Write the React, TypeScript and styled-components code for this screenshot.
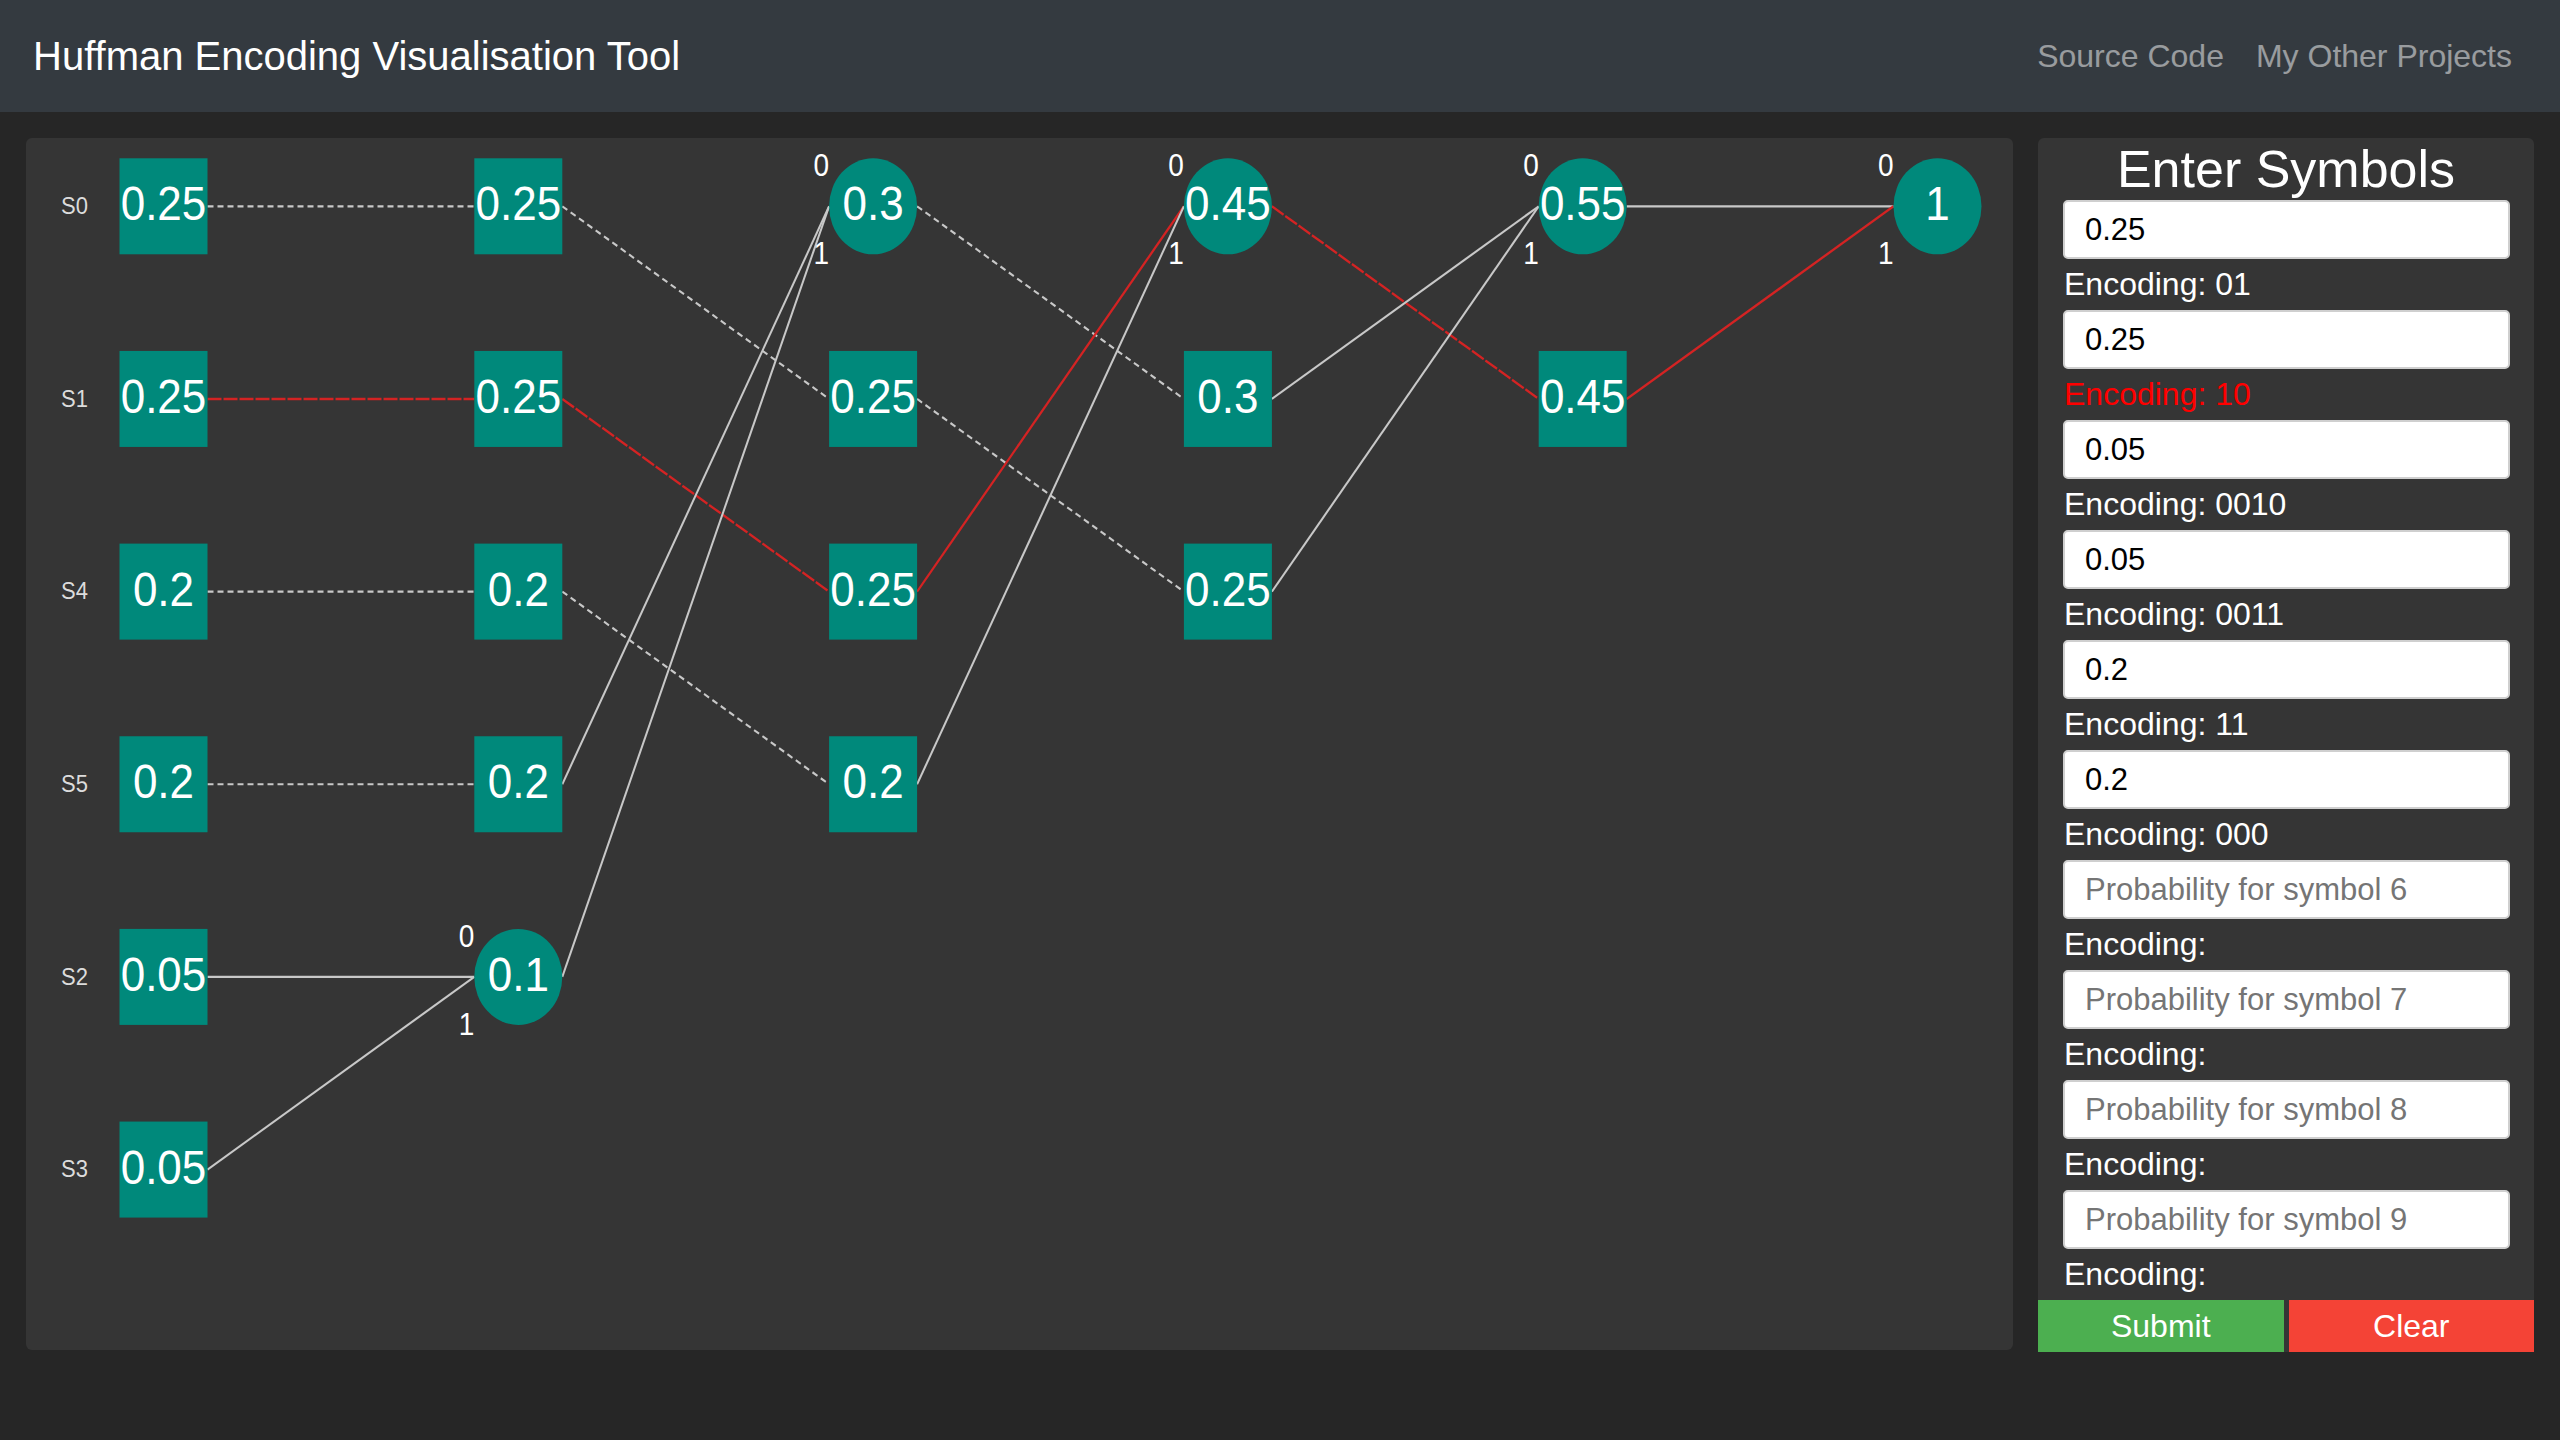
import React from "react";
import styled, { createGlobalStyle } from "styled-components";

const GlobalStyle = createGlobalStyle`
  html, body {
    margin: 0;
    padding: 0;
    background: #262626;
    font-family: "Liberation Sans", Arial, Helvetica, sans-serif;
  }
  * { box-sizing: border-box; }
`;

const Page = styled.div`
  width: 2560px;
  min-height: 1440px;
  background: #262626;
`;

const Header = styled.header`
  height: 112px;
  background: #343a40;
  display: flex;
  align-items: center;
  justify-content: space-between;
  padding: 0 32px 0 33px;
`;

const Brand = styled.div`
  font-size: 40px;
  line-height: 60px;
  color: #ffffff;
`;

const NavLinks = styled.nav`
  display: flex;
  align-items: center;
`;

const NavLink = styled.a`
  font-size: 32px;
  line-height: 48px;
  padding: 0 16px;
  color: rgba(255, 255, 255, 0.5);
  text-decoration: none;
`;

const Main = styled.main`
  display: flex;
  align-items: flex-start;
  gap: 25px;
  padding: 26px 26px 0 26px;
`;

const Canvas = styled.section`
  flex: 1;
  height: 1212px;
  background: #353535;
  border-radius: 6px;
  overflow: hidden;
`;

const Graph = styled.svg`
  display: block;
  width: 100%;
  height: 100%;
  font-family: "Liberation Sans", Arial, sans-serif;
`;

const Sidebar = styled.aside`
  width: 496px;
  height: 1214px;
  background: #353535;
  border-radius: 6px 6px 0 0;
  display: flex;
  flex-direction: column;
`;

const SidebarTitle = styled.h2`
  margin: 0;
  height: 62px;
  font-size: 52px;
  line-height: 62px;
  font-weight: 400;
  text-align: center;
  color: #ffffff;
`;

const Fields = styled.div`
  display: flex;
  flex-direction: column;
  padding: 0 24px 0 25px;
`;

const Input = styled.input`
  height: 59px;
  width: 100%;
  border: 2px solid #cfcfcf;
  border-radius: 5px;
  padding: 0 20px;
  font-family: "Liberation Sans", Arial, sans-serif;
  font-size: 31px;
  color: #000;
  background: #fff;
  outline: none;
  &::placeholder {
    color: #757575;
  }
`;

const Encoding = styled.div<{ $active?: boolean }>`
  height: 51px;
  line-height: 51px;
  font-size: 32px;
  padding-left: 1px;
  color: ${(p) => (p.$active ? "#ff0000" : "#ffffff")};
`;

const ButtonRow = styled.div`
  display: flex;
  gap: 5px;
  margin-top: auto;
`;

const ActionButton = styled.button<{ $variant: "submit" | "clear" }>`
  flex: 1;
  height: 52px;
  border: none;
  margin: 0;
  font-family: "Liberation Sans", Arial, sans-serif;
  font-size: 32px;
  color: #ffffff;
  background: ${(p) => (p.$variant === "submit" ? "#4caf50" : "#f44336")};
  cursor: pointer;
`;

// Graph geometry (viewBox units; y is stretched by preserveAspectRatio="none")
const VB_W = 1987;
const VB_H = 1111;
const COL_X0 = 137.5;
const COL_DX = 354.8;
const ROW_Y0 = 62.6;
const ROW_DY = 176.6;
const HALF = 44;

const cx = (c: number) => COL_X0 + COL_DX * c;
const cy = (r: number) => ROW_Y0 + ROW_DY * r;

type GNode = { c: number; r: number; v: string; merged?: boolean };

const nodes: GNode[] = [
  { c: 0, r: 0, v: "0.25" },
  { c: 0, r: 1, v: "0.25" },
  { c: 0, r: 2, v: "0.2" },
  { c: 0, r: 3, v: "0.2" },
  { c: 0, r: 4, v: "0.05" },
  { c: 0, r: 5, v: "0.05" },
  { c: 1, r: 0, v: "0.25" },
  { c: 1, r: 1, v: "0.25" },
  { c: 1, r: 2, v: "0.2" },
  { c: 1, r: 3, v: "0.2" },
  { c: 1, r: 4, v: "0.1", merged: true },
  { c: 2, r: 0, v: "0.3", merged: true },
  { c: 2, r: 1, v: "0.25" },
  { c: 2, r: 2, v: "0.25" },
  { c: 2, r: 3, v: "0.2" },
  { c: 3, r: 0, v: "0.45", merged: true },
  { c: 3, r: 1, v: "0.3" },
  { c: 3, r: 2, v: "0.25" },
  { c: 4, r: 0, v: "0.55", merged: true },
  { c: 4, r: 1, v: "0.45" },
  { c: 5, r: 0, v: "1", merged: true },
];

const symbols = ["S0", "S1", "S4", "S5", "S2", "S3"];

type GEdge = { c: number; from: number; to: number; dashed?: boolean; red?: boolean };

const edges: GEdge[] = [
  { c: 0, from: 0, to: 0, dashed: true },
  { c: 0, from: 1, to: 1, dashed: true, red: true },
  { c: 0, from: 2, to: 2, dashed: true },
  { c: 0, from: 3, to: 3, dashed: true },
  { c: 0, from: 4, to: 4 },
  { c: 0, from: 5, to: 4 },
  { c: 1, from: 0, to: 1, dashed: true },
  { c: 1, from: 1, to: 2, dashed: true, red: true },
  { c: 1, from: 2, to: 3, dashed: true },
  { c: 1, from: 3, to: 0 },
  { c: 1, from: 4, to: 0 },
  { c: 2, from: 0, to: 1, dashed: true },
  { c: 2, from: 1, to: 2, dashed: true },
  { c: 2, from: 2, to: 0, red: true },
  { c: 2, from: 3, to: 0 },
  { c: 3, from: 0, to: 1, dashed: true, red: true },
  { c: 3, from: 1, to: 0 },
  { c: 3, from: 2, to: 0 },
  { c: 4, from: 0, to: 0 },
  { c: 4, from: 1, to: 0, red: true },
];

const edgeDash = (e: GEdge) => {
  if (!e.dashed) return undefined;
  return e.red ? "14 2" : "6 4";
};

const fields = [
  { value: "0.25", enc: "01" },
  { value: "0.25", enc: "10", active: true },
  { value: "0.05", enc: "0010" },
  { value: "0.05", enc: "0011" },
  { value: "0.2", enc: "11" },
  { value: "0.2", enc: "000" },
  { placeholder: "Probability for symbol 6", enc: "" },
  { placeholder: "Probability for symbol 7", enc: "" },
  { placeholder: "Probability for symbol 8", enc: "" },
  { placeholder: "Probability for symbol 9", enc: "" },
];

function HuffmanGraph() {
  return (
    <Graph viewBox={`0 0 ${VB_W} ${VB_H}`} preserveAspectRatio="none">
      {edges.map((e, i) => (
        <line
          key={`e${i}`}
          x1={cx(e.c) + HALF}
          y1={cy(e.from)}
          x2={cx(e.c + 1) - HALF}
          y2={cy(e.to)}
          stroke={e.red ? "#d42323" : "#c8c8c8"}
          strokeWidth={e.red ? 2.2 : 2}
          strokeDasharray={edgeDash(e)}
        />
      ))}
      {symbols.map((s, r) => (
        <text key={s} x={62} y={cy(r) + 7} fill="#dcdcdc" fontSize={22} textAnchor="end">
          {s}
        </text>
      ))}
      {nodes.map((n, i) => (
        <g key={`n${i}`}>
          {n.merged ? (
            <ellipse cx={cx(n.c)} cy={cy(n.r)} rx={HALF} ry={HALF} fill="#00897b" />
          ) : (
            <rect x={cx(n.c) - HALF} y={cy(n.r) - HALF} width={HALF * 2} height={HALF * 2} fill="#00897b" />
          )}
          <text x={cx(n.c)} y={cy(n.r) + 13} fill="#ffffff" fontSize={44} textAnchor="middle">
            {n.v}
          </text>
          {n.merged && (
            <>
              <text x={cx(n.c) - HALF} y={cy(n.r) - 27.5} fill="#ffffff" fontSize={28} textAnchor="end">
                0
              </text>
              <text x={cx(n.c) - HALF} y={cy(n.r) + 53} fill="#ffffff" fontSize={28} textAnchor="end">
                1
              </text>
            </>
          )}
        </g>
      ))}
    </Graph>
  );
}

export default function App() {
  return (
    <>
      <GlobalStyle />
      <Page>
        <Header>
          <Brand>Huffman Encoding Visualisation Tool</Brand>
          <NavLinks>
            <NavLink href="#">Source Code</NavLink>
            <NavLink href="#">My Other Projects</NavLink>
          </NavLinks>
        </Header>
        <Main>
          <Canvas>
            <HuffmanGraph />
          </Canvas>
          <Sidebar>
            <SidebarTitle>Enter Symbols</SidebarTitle>
            <Fields>
              {fields.map((f, i) => (
                <React.Fragment key={i}>
                  <Input defaultValue={f.value} placeholder={f.placeholder} />
                  <Encoding $active={f.active}>Encoding: {f.enc}</Encoding>
                </React.Fragment>
              ))}
            </Fields>
            <ButtonRow>
              <ActionButton $variant="submit">Submit</ActionButton>
              <ActionButton $variant="clear">Clear</ActionButton>
            </ButtonRow>
          </Sidebar>
        </Main>
      </Page>
    </>
  );
}
